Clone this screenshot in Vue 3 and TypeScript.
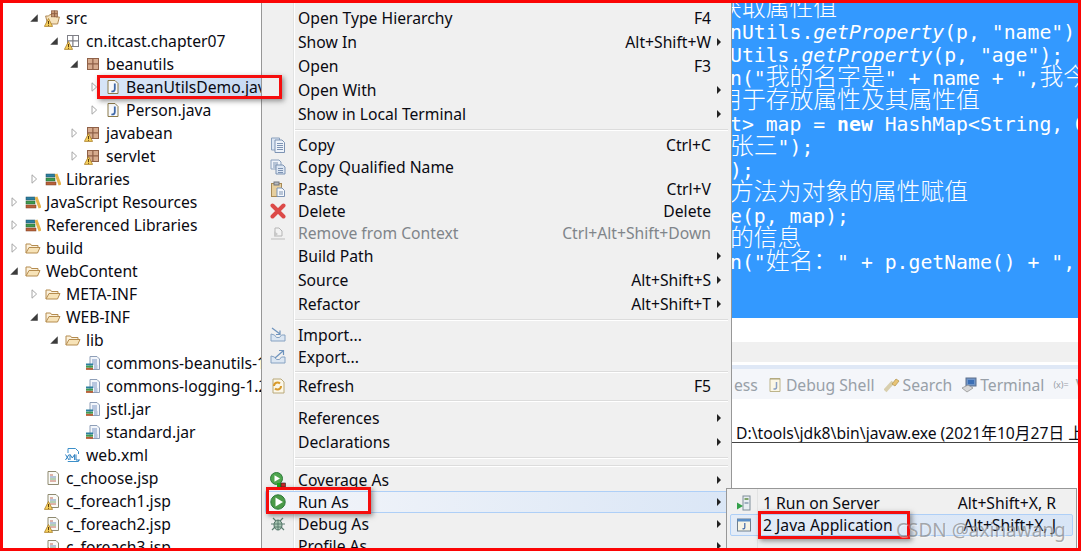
<script setup lang="ts">
interface TreeRow { text: string; depth: number; arrow?: 'open' | 'closed'; icon: string; warn?: boolean; selected?: boolean }
interface MenuRow { sep?: boolean; label?: string; key?: string; sub?: boolean; icon?: string; tall?: boolean; disabled?: boolean; active?: boolean; sepClass?: string }
interface CodePart { t: string; c?: string }
interface CodeLine { col: number; parts: CodePart[] }

const tree: TreeRow[] = [
  { text: 'src', depth: 2, arrow: 'open', icon: 'i-srcroot', warn: true },
  { text: 'cn.itcast.chapter07', depth: 3, arrow: 'open', icon: 'i-pkg-empty', warn: true },
  { text: 'beanutils', depth: 4, arrow: 'open', icon: 'i-pkg' },
  { text: 'BeanUtilsDemo.java', depth: 5, arrow: 'closed', icon: 'i-java', selected: true },
  { text: 'Person.java', depth: 5, arrow: 'closed', icon: 'i-java' },
  { text: 'javabean', depth: 4, arrow: 'closed', icon: 'i-pkg', warn: true },
  { text: 'servlet', depth: 4, arrow: 'closed', icon: 'i-pkg', warn: true },
  { text: 'Libraries', depth: 2, arrow: 'closed', icon: 'i-lib' },
  { text: 'JavaScript Resources', depth: 1, arrow: 'closed', icon: 'i-lib' },
  { text: 'Referenced Libraries', depth: 1, arrow: 'closed', icon: 'i-lib' },
  { text: 'build', depth: 1, arrow: 'closed', icon: 'i-folder' },
  { text: 'WebContent', depth: 1, arrow: 'open', icon: 'i-folder' },
  { text: 'META-INF', depth: 2, arrow: 'closed', icon: 'i-folder' },
  { text: 'WEB-INF', depth: 2, arrow: 'open', icon: 'i-folder' },
  { text: 'lib', depth: 3, arrow: 'open', icon: 'i-folder' },
  { text: 'commons-beanutils-1.9.3.jar', depth: 4, icon: 'i-jar' },
  { text: 'commons-logging-1.2.jar', depth: 4, icon: 'i-jar' },
  { text: 'jstl.jar', depth: 4, icon: 'i-jar' },
  { text: 'standard.jar', depth: 4, icon: 'i-jar' },
  { text: 'web.xml', depth: 3, icon: 'i-xml' },
  { text: 'c_choose.jsp', depth: 2, icon: 'i-jsp' },
  { text: 'c_foreach1.jsp', depth: 2, icon: 'i-jsp', warn: true },
  { text: 'c_foreach2.jsp', depth: 2, icon: 'i-jsp', warn: true },
  { text: 'c_foreach3.jsp', depth: 2, icon: 'i-jsp', warn: true },
]

const menu: MenuRow[] = [
  { label: 'Open Type Hierarchy', key: 'F4', tall: true },
  { label: 'Show In', key: 'Alt+Shift+W', sub: true, tall: true },
  { label: 'Open', key: 'F3', tall: true },
  { label: 'Open With', sub: true, tall: true },
  { label: 'Show in Local Terminal', sub: true, tall: true },
  { sep: true },
  { label: 'Copy', key: 'Ctrl+C', icon: 'i-copy' },
  { label: 'Copy Qualified Name', icon: 'i-copyq' },
  { label: 'Paste', key: 'Ctrl+V', icon: 'i-paste' },
  { label: 'Delete', key: 'Delete', icon: 'i-delete' },
  { label: 'Remove from Context', key: 'Ctrl+Alt+Shift+Down', icon: 'i-remove', disabled: true },
  { label: 'Build Path', sub: true, tall: true },
  { label: 'Source', key: 'Alt+Shift+S', sub: true, tall: true },
  { label: 'Refactor', key: 'Alt+Shift+T', sub: true, tall: true },
  { sep: true },
  { label: 'Import...', icon: 'i-import' },
  { label: 'Export...', icon: 'i-export' },
  { sep: true, sepClass: 'thin' },
  { label: 'Refresh', key: 'F5', icon: 'i-refresh' },
  { sep: true, sepClass: 'wide' },
  { label: 'References', sub: true, tall: true },
  { label: 'Declarations', sub: true, tall: true },
  { sep: true },
  { sep: true, sepClass: 'thin' },
  { label: 'Coverage As', sub: true, icon: 'i-coverage' },
  { label: 'Run As', sub: true, icon: 'i-run', active: true },
  { label: 'Debug As', sub: true, icon: 'i-debug' },
  { label: 'Profile As', sub: true },
]

const code: CodeLine[] = [
  { col: 24, parts: [{ t: '获取属性值', c: 'cjk' }] },
  { col: 25, parts: [{ t: 'nUtils.' }, { t: 'getProperty', c: 'it' }, { t: '(p, "name");' }] },
  { col: 25, parts: [{ t: 'Utils.' }, { t: 'getProperty', c: 'it' }, { t: '(p, "age");' }] },
  { col: 25, parts: [{ t: 'n("' }, { t: '我的名字是', c: 'cjk' }, { t: '" + name + ",' }, { t: '我今年', c: 'cjk' }] },
  { col: 24, parts: [{ t: '用于存放属性及其属性值', c: 'cjk' }] },
  { col: 25, parts: [{ t: 't> map = ' }, { t: 'new', c: 'bold' }, { t: ' HashMap<String, Object>' }] },
  { col: 25, parts: [{ t: '张三', c: 'cjk' }, { t: '");' }] },
  { col: 25, parts: [{ t: ');' }] },
  { col: 25, parts: [{ t: '方法为对象的属性赋值', c: 'cjk' }] },
  { col: 25, parts: [{ t: 'e(p, map);' }] },
  { col: 25, parts: [{ t: '的信息', c: 'cjk' }] },
  { col: 25, parts: [{ t: 'n("' }, { t: '姓名：', c: 'cjk' }, { t: '" + p.getName() + ",' }] },
]
const codeOffset = (col: number): string => `${(col - 25) * 11.9 - 2}px`
</script>

<template>
  <div class="screen">
    <svg class="defs" width="0" height="0" aria-hidden="true">
      <defs>
        <symbol id="i-open" viewBox="0 0 8 8"><path d="M7 1v6H1z" fill="#3c3c3c"/></symbol>
        <symbol id="i-closed" viewBox="0 0 8 10"><path d="M2 .8 6.600 5 2 9.200z" fill="#fff" stroke="#a6a6a6"/></symbol>
        <symbol id="i-warn" viewBox="0 0 9 9"><path d="M4.500.5 8.600 8.400H.4z" fill="#f6cf5c" stroke="#a97f2c" stroke-width=".8"/><path d="M4.500 3v3M4.500 6.800v.9" stroke="#5b3d10" stroke-width="1"/></symbol>
        <symbol id="i-srcroot" viewBox="0 0 16 16"><path d="M.6 6h3l1.200-1.400h6V7h3.600L12.600 14H2.600z" fill="#f5e2bd" stroke="#a97f48" stroke-width=".9"/><g fill="#c79a77" stroke="#8a5a3e" stroke-width=".7"><rect x="6.500" y=".8" width="3" height="3"/><rect x="9.500" y=".8" width="3" height="3"/><rect x="6.500" y="3.800" width="3" height="3"/><rect x="9.500" y="3.800" width="3" height="3"/></g></symbol>
        <symbol id="i-pkg" viewBox="0 0 16 16"><g fill="#d6ab8e" stroke="#8f6148" stroke-width="1"><rect x="2.500" y="2.500" width="5.500" height="5.500"/><rect x="8" y="2.500" width="5.500" height="5.500"/><rect x="2.500" y="8" width="5.500" height="5.500"/><rect x="8" y="8" width="5.500" height="5.500"/></g></symbol>
        <symbol id="i-pkg-empty" viewBox="0 0 16 16"><g fill="#fff" stroke="#7f7f86" stroke-width="1"><rect x="2.500" y="2.500" width="5.500" height="5.500"/><rect x="8" y="2.500" width="5.500" height="5.500"/><rect x="2.500" y="8" width="5.500" height="5.500"/><rect x="8" y="8" width="5.500" height="5.500"/></g></symbol>
        <symbol id="i-java" viewBox="0 0 16 16"><path d="M3 1.500h7l3 3v10H3z" fill="#f7f9fc" stroke="#8b7a4a"/><path d="M9.800 4.500v5.600c0 2-1.600 2.600-3.400 2.200" fill="none" stroke="#3f68a8" stroke-width="1.800"/></symbol>
        <symbol id="i-lib" viewBox="0 0 16 16"><rect x="1" y="3" width="9" height="3" fill="#2c7f9f" stroke="#1f4e66" stroke-width=".5"/><rect x="1" y="7" width="9" height="3" fill="#3f9a4f" stroke="#245f30" stroke-width=".5"/><rect x="1" y="11" width="10" height="3" fill="#b8613a" stroke="#7a3c20" stroke-width=".5"/><path d="M11 3 15 14" stroke="#e7b34a" stroke-width="3"/></symbol>
        <symbol id="i-folder" viewBox="0 0 16 16"><path d="M1 13V4h4.500l1 1.500H13V8" fill="#fbf1dc" stroke="#b58c4f"/><path d="M1 13 4 7.500h11L12.500 13z" fill="#f7e3b8" stroke="#b58c4f"/></symbol>
        <symbol id="i-jar" viewBox="0 0 16 16"><path d="M5 1.500h7l2.500 2.500v10.500H5z" fill="#f3f6fb" stroke="#8f9fb8"/><path d="M7 5h5M7 7h5M7 9h5M9 11h3.500M9 13h3.500" stroke="#7d96c2"/><rect x="1" y="8.500" width="7" height="2" fill="#2c7f9f"/><rect x="1" y="10.700" width="7" height="2" fill="#3f9a4f"/><rect x="1" y="12.900" width="7" height="2" fill="#b8613a"/></symbol>
        <symbol id="i-xml" viewBox="0 0 16 16"><path d="M3 6V1.500h7.500l3 3V7M13.500 13v1.500H3V14" fill="none" stroke="#3c8fc9"/><path d="M.5 7.500 4 13M4 7.500.5 13M5 13V7.500L7.300 11 9.600 7.500V13M11 7.500V13h4" fill="none" stroke="#2b7fc0" stroke-width="1"/></symbol>
        <symbol id="i-jsp" viewBox="0 0 16 16"><path d="M3 1.500h8l2.500 2.500v10.500H3z" fill="#fafaf7" stroke="#8f8a70"/><path d="M5 5h3" stroke="#c26a5a"/><path d="M5 7h6" stroke="#6e8fb8"/><path d="M5 9h6" stroke="#6fa36f"/><path d="M5 11h6" stroke="#c26a5a"/></symbol>
        <symbol id="i-copy" viewBox="0 0 16 16"><path d="M1.500 1h8v12h-8z" fill="#dce6f3" stroke="#8aa0bd"/><path d="M5 3h7l2.500 2.500v10H5z" fill="#eef3fa" stroke="#7d93b3"/><path d="M7 6.500h6M7 8.500h6M7 10.500h6M7 12.500h6" stroke="#7d93b3"/></symbol>
        <symbol id="i-copyq" viewBox="0 0 16 16"><path d="M1 1h8l2 2v7H1z" fill="#eef3fa" stroke="#8aa0bd"/><path d="M3 4h5M3 6h5M3 8h3" stroke="#7d93b3"/><path d="M6 6h7l2 2v7H6z" fill="#dce6f3" stroke="#7d93b3"/><path d="M8 9.500h5M8 11.500h5M8 13.500h5" stroke="#7d93b3"/></symbol>
        <symbol id="i-paste" viewBox="0 0 16 16"><rect x="1.500" y="2.500" width="10" height="13" fill="#e6cf9f" stroke="#a88a55"/><rect x="4" y="1" width="5" height="3" fill="#b5b9bf" stroke="#6f737a"/><path d="M7 7h5l2.500 2.500v6H7z" fill="#f5f8fc" stroke="#7d93b3"/><path d="M9 11h4M9 13h4" stroke="#7d93b3"/></symbol>
        <symbol id="i-delete" viewBox="0 0 16 16"><path d="M2.500 2.500 13.500 13.500M13.500 2.500 2.500 13.500" stroke="#dc4a48" stroke-width="4" stroke-linecap="round"/></symbol>
        <symbol id="i-remove" viewBox="0 0 16 16"><path d="M1 14h14" stroke="#bdbdbd"/><path d="M5 3h4l3 3v5H5z" fill="#f2f2f2" stroke="#b5b5b5"/><path d="M4 6 8 9 4 12z" fill="#c8c8c8"/></symbol>
        <symbol id="i-import" viewBox="0 0 16 16"><path d="M1 7v7h14V8h-3.500l-2 2.500h-3L4.500 8z" fill="#dbe6f2" stroke="#86a2c2"/><path d="M2 1 10 7M10 3.500V7.500H6" fill="none" stroke="#6e93bd" stroke-width="1.200"/></symbol>
        <symbol id="i-export" viewBox="0 0 16 16"><path d="M1 7v7h14V8h-3.500l-2 2.500h-3L4.500 8z" fill="#dbe6f2" stroke="#86a2c2"/><path d="M5 9 13 2M9 1.500h4.500V6" fill="none" stroke="#6e93bd" stroke-width="1.200"/></symbol>
        <symbol id="i-refresh" viewBox="0 0 16 16"><path d="M3 1h8l3 3v11H3z" fill="#fbf7e9" stroke="#b9a878"/><path d="M4 8a3.500 3.500 0 0 1 6-2.500M11 8a3.500 3.500 0 0 1-6 2.500" fill="none" stroke="#d89a2b" stroke-width="2"/></symbol>
        <symbol id="i-coverage" viewBox="0 0 16 16"><circle cx="6.500" cy="6.500" r="6" fill="#4fa64f" stroke="#2c7a3a"/><path d="M4.500 3.200 10 6.500 4.500 9.800z" fill="#fff"/><rect x="7" y="11" width="4" height="4" fill="#1aa31a"/><rect x="11" y="11" width="4.500" height="4" fill="#c42525" stroke="#222" stroke-width=".6"/></symbol>
        <symbol id="i-run" viewBox="0 0 16 16"><circle cx="8" cy="8" r="7.200" fill="#4b9a48" stroke="#2c7a3a"/><path d="M5.500 3.500 13 8l-7.500 4.500z" fill="#fff"/></symbol>
        <symbol id="i-debug" viewBox="0 0 16 16"><path d="M3 2l3 3M13 2l-3 3M1 8h3M12 8h3M2 14l3-3M14 14l-3-3" stroke="#5f7f72" stroke-width="1.200"/><ellipse cx="8" cy="9" rx="4" ry="5" fill="#a9c7b4" stroke="#4d6f62"/><path d="M8 4v10M4.500 8h7M4.500 11h7" stroke="#4d6f62" stroke-width=".8"/></symbol>
        <symbol id="i-server" viewBox="0 0 16 16"><rect x="7" y="1" width="7" height="14" fill="#e8edf2" stroke="#7f8d99"/><rect x="8.500" y="3" width="4" height="2" fill="#7fa36a"/><rect x="8.500" y="7" width="4" height="2" fill="#9fb0c0"/><path d="M1 7.500 7 11 1 14.500z" fill="#33a04a"/></symbol>
        <symbol id="i-app" viewBox="0 0 16 16"><rect x="1.500" y="2" width="13" height="12" fill="#f8f5e6" stroke="#6f7f8f"/><rect x="1.500" y="2" width="13" height="2.500" fill="#5b8fc7"/><path d="M8.800 6v4.500c0 1.200-1 1.500-2.300 1.200" fill="none" stroke="#3f68a8" stroke-width="1.200"/></symbol>
        <symbol id="i-shell" viewBox="0 0 16 16"><path d="M3 1.500h10v13H3z" fill="#fbf7e6" stroke="#bdb48a"/><path d="M4 1v2M6 1v2M8 1v2M10 1v2M12 1v2" stroke="#a99f75"/><path d="M9.500 5v5.500c0 1.300-1.200 1.700-3 1.200" fill="none" stroke="#8aa0c4" stroke-width="1.500"/></symbol>
        <symbol id="i-search" viewBox="0 0 16 16"><path d="M1 14 9 5" stroke="#d8cfae" stroke-width="4"/><path d="M8 7 12 2l3 2-4 5z" fill="#e9c474" stroke="#b89a55" stroke-width=".8"/></symbol>
        <symbol id="i-terminal" viewBox="0 0 16 16"><rect x="5" y="1" width="10" height="8" fill="#6f95c9" stroke="#5c6f8a"/><rect x="7" y="3" width="6" height="4" fill="#3c6fb5"/><path d="M1 11 7 8l5 3-6 4z" fill="#d8d8d8" stroke="#8a8a8a" stroke-width=".7"/></symbol>
      </defs>
    </svg>

    <aside class="tree">
      <div v-for="row in tree" :key="row.text" class="tree-row" :class="{ selected: row.selected }" :style="{ paddingLeft: `${(row.depth - 1) * 20 + 5}px` }">
        <span class="arrow"><svg v-if="row.arrow" width="10" height="10"><use :href="row.arrow === 'open' ? '#i-open' : '#i-closed'" /></svg></span>
        <span class="tree-icon">
          <svg width="16" height="16"><use :href="`#${row.icon}`" /></svg>
          <svg v-if="row.warn" class="warn" width="9" height="9"><use href="#i-warn" /></svg>
        </span>
        <span class="tree-label">{{ row.text }}</span>
      </div>
    </aside>

    <main class="work">
      <section class="code">
        <div v-for="(line, i) in code" :key="i" class="code-line" :style="{ marginLeft: codeOffset(line.col) }">
          <span v-for="(part, j) in line.parts" :key="j" :class="part.c">{{ part.t }}</span>
        </div>
      </section>
      <div class="editor-rest"></div>
      <div class="sash"></div>
      <div class="tab-strip"></div>
      <div class="tabs">
        <span class="tab cut">ess</span>
        <span class="tab"><svg width="16" height="16"><use href="#i-shell" /></svg>Debug Shell</span>
        <span class="tab"><svg width="16" height="16"><use href="#i-search" /></svg>Search</span>
        <span class="tab"><svg width="16" height="16"><use href="#i-terminal" /></svg>Terminal</span>
        <span class="tab vars"><small>(x)=</small>V</span>
      </div>
      <div class="console-head"><span>D:\tools\jdk8\bin\javaw.exe (2021年10月27日 上午</span></div>
    </main>

    <nav class="menu">
      <template v-for="(m, i) in menu" :key="i">
        <div v-if="m.sep" class="sep" :class="m.sepClass"></div>
        <div v-else class="item" :class="{ tall: m.tall, disabled: m.disabled, active: m.active }">
          <span class="item-icon"><svg v-if="m.icon" width="16" height="16"><use :href="`#${m.icon}`" /></svg></span>
          <span class="item-label">{{ m.label }}</span>
          <span class="item-key">{{ m.key }}</span>
          <span class="item-arrow" :class="{ on: m.sub }"></span>
        </div>
      </template>
    </nav>

    <nav class="submenu">
      <div class="sub-item">
        <span class="sub-icon"><svg width="16" height="16"><use href="#i-server" /></svg></span>
        <span class="item-label">1 Run on Server</span>
        <span class="item-key">Alt+Shift+X, R</span>
      </div>
      <div class="sub-item active">
        <span class="sub-icon"><svg width="16" height="16"><use href="#i-app" /></svg></span>
        <span class="item-label">2 Java Application</span>
        <span class="item-key">Alt+Shift+X, J</span>
      </div>
    </nav>

    <div class="mark mark-file"></div>
    <div class="mark mark-run"></div>
    <div class="mark mark-app"></div>
    <div class="watermark">CSDN @axinawang</div>
    <div class="frame"></div>
  </div>
</template>

<style scoped>
.screen {
  position: relative;
  width: 1081px;
  height: 551px;
  overflow: hidden;
  display: flex;
  background: #fff;
  color: #0a0a12;
  font-family: "Noto Sans", "Noto Sans CJK SC", sans-serif;
  font-size: 15.7px;
}
.defs { position: absolute; }
svg { display: block; }

.tree { width: 262px; flex: none; padding-top: 6px; overflow: hidden; box-sizing: border-box; }
.tree-row { display: flex; align-items: center; height: 23px; white-space: nowrap; box-sizing: border-box; }
.tree-row.selected { background: linear-gradient(to right, transparent 97px, #d6e4f7 97px, #d6e4f7 160px, #c6d9f2); }
.arrow { width: 18px; height: 10px; flex: none; display: flex; justify-content: flex-end; box-sizing: border-box; padding-left: 4px; }
.arrow svg { margin-right: 4px; }
.tree-icon { position: relative; width: 20px; flex: none; display: flex; justify-content: center; margin-right: 3px; }
.warn { position: absolute; left: 1px; bottom: -1px; }

.work { flex: 1; min-width: 0; padding-left: 470px; display: flex; flex-direction: column; }
.code {
  height: 320px; margin-top: -2px; background: #3399ff; color: #fff; overflow: hidden;
  font-family: "DejaVu Sans Mono", monospace; font-size: 19.77px; flex: none;
}
.code-line { height: 23px; line-height: 23px; white-space: pre; }
.cjk { font-family: "Noto Sans CJK SC", sans-serif; font-size: 23.8px; font-weight: 300; line-height: 0; }
.it { font-style: italic; }
.bold { font-weight: 700; }
.editor-rest { height: 24px; flex: none; background: #fff; }
.sash { height: 20px; flex: none; background: #f0f0f0; border-bottom: 3px solid #fff; box-sizing: content-box; }
.tab-strip { height: 4px; flex: none; background: #dfe8f6; }
.tabs {
  height: 30px; flex: none; display: flex; align-items: center; background: #f4f6fa; color: #98a0a8;
  padding: 1px 0 0 2px; box-sizing: border-box; white-space: nowrap; overflow: hidden;
}
.tab { display: flex; align-items: center; gap: 3px; margin-right: 9px; }
.vars small { font-size: 9px; margin-right: 4px; }
.console-head {
  height: 44px; flex: none; box-sizing: border-box; border-bottom: 1px solid #444; padding-left: 4px;
  display: flex; align-items: flex-end; white-space: nowrap; overflow: hidden; line-height: 18px;
}

.menu {
  position: absolute; left: 261px; top: 0; width: 471px; height: 551px; box-sizing: border-box; padding-top: 6px;
  overflow: hidden; border-left: 1px solid #979797; border-right: 1px solid #979797;
  background: linear-gradient(to right, #f0f0f0 31px, #e2e3e3 31px, #e2e3e3 32px, #fff 32px, #fff 33px, #f0f0f0 33px);
}
.item { display: flex; align-items: center; height: 22px; white-space: nowrap; position: relative; }
.item.tall { height: 24px; }
.item-icon { width: 31px; height: 16px; flex: none; display: flex; justify-content: center; margin-right: 5px; }
.item-label { flex: 1; }
.item-arrow { width: 20px; flex: none; display: flex; position: relative; height: 10px; }
.item-arrow.on::before {
  content: ""; width: 0; height: 0; margin-left: 6px; margin-top: 1px;
  border-style: solid; border-width: 4px 0 4px 4px; border-color: transparent transparent transparent #222;
}
.disabled { color: #80858a; }
.item.active {
  margin-left: 3px; border: 1px solid #aecff7; border-right: none; border-radius: 2px 0 0 2px; box-sizing: border-box;
  background: linear-gradient(to right, #f3f5f9, #dae6f6);
}
.item.active .item-icon { margin-left: -4px; }
.sep { height: 8px; position: relative; margin-left: 33px; margin-right: 3px; }
.sep::after { content: ""; position: absolute; left: 0; right: 0; top: 3px; height: 1px; background: #dcdcdc; border-bottom: 1px solid #fff; }
.sep.thin { height: 7px; }
.sep.wide { height: 9px; }

.submenu {
  position: absolute; left: 726px; top: 488px; width: 351px; height: 70px; box-sizing: border-box; padding-top: 3px;
  border: 1px solid #979797;
  background: linear-gradient(to right, #f0f0f0 30px, #e2e3e3 30px, #e2e3e3 31px, #f0f0f0 31px);
}
.sub-item { display: flex; align-items: center; height: 22px; white-space: nowrap; margin: 0 3px; padding-right: 16px; box-sizing: border-box; border: 1px solid transparent; }
.sub-item.active { background: linear-gradient(to right, #e4ecf7, #d8e5f6); border-color: #aecff7; border-radius: 2px; }
.sub-icon { width: 26px; flex: none; display: flex; justify-content: center; margin-right: 6px; }

.mark { position: absolute; border: 3px solid #f50d0d; box-sizing: border-box; box-shadow: 2px 2px 5px rgba(60, 60, 60, .55); }
.mark-file { left: 97px; top: 75px; width: 185px; height: 24px; }
.mark-run { left: 266px; top: 487px; width: 105px; height: 27px; }
.mark-app { left: 758px; top: 511px; width: 152px; height: 28px; }

.watermark {
  position: absolute; left: 896px; top: 517px; font-size: 19px; line-height: 26px; color: rgba(120, 120, 120, .62);
  font-family: "Noto Sans", sans-serif; white-space: nowrap; text-shadow: 1px 1px 1px rgba(255, 255, 255, .5);
}
.frame { position: absolute; inset: 0; border: 3px solid #fb0505; pointer-events: none; }
</style>
